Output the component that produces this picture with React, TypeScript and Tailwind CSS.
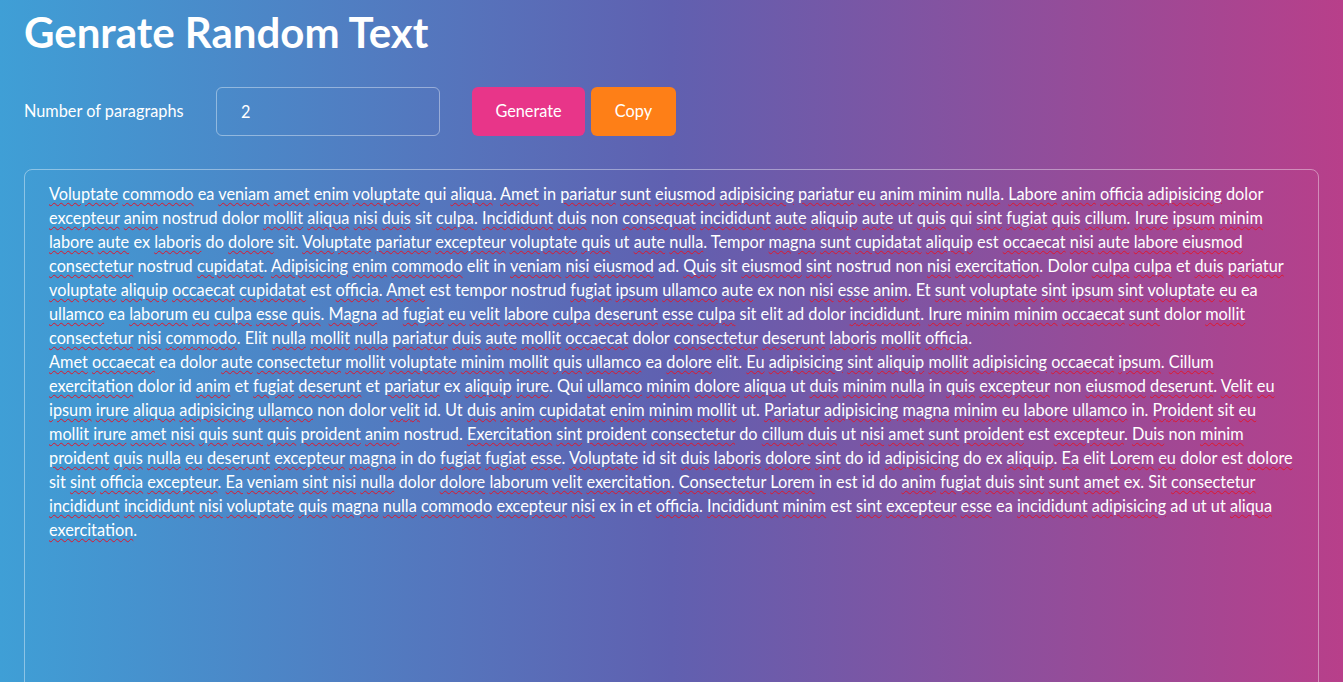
import { useState } from 'react';

const paragraphs: string[][] = [
  [
    'Voluptate commodo ea veniam amet enim voluptate qui aliqua. Amet in pariatur sunt eiusmod adipisicing pariatur eu anim minim nulla. Labore anim officia adipisicing dolor',
    'excepteur anim nostrud dolor mollit aliqua nisi duis sit culpa. Incididunt duis non consequat incididunt aute aliquip aute ut quis qui sint fugiat quis cillum. Irure ipsum minim',
    'labore aute ex laboris do dolore sit. Voluptate pariatur excepteur voluptate quis ut aute nulla. Tempor magna sunt cupidatat aliquip est occaecat nisi aute labore eiusmod',
    'consectetur nostrud cupidatat. Adipisicing enim commodo elit in veniam nisi eiusmod ad. Quis sit eiusmod sint nostrud non nisi exercitation. Dolor culpa culpa et duis pariatur',
    'voluptate aliquip occaecat cupidatat est officia. Amet est tempor nostrud fugiat ipsum ullamco aute ex non nisi esse anim. Et sunt voluptate sint ipsum sint voluptate eu ea',
    'ullamco ea laborum eu culpa esse quis. Magna ad fugiat eu velit labore culpa deserunt esse culpa sit elit ad dolor incididunt. Irure minim minim occaecat sunt dolor mollit',
    'consectetur nisi commodo. Elit nulla mollit nulla pariatur duis aute mollit occaecat dolor consectetur deserunt laboris mollit officia.',
  ],
  [
    'Amet occaecat ea dolor aute consectetur mollit voluptate minim mollit quis ullamco ea dolore elit. Eu adipisicing sint aliquip mollit adipisicing occaecat ipsum. Cillum',
    'exercitation dolor id anim et fugiat deserunt et pariatur ex aliquip irure. Qui ullamco minim dolore aliqua ut duis minim nulla in quis excepteur non eiusmod deserunt. Velit eu',
    'ipsum irure aliqua adipisicing ullamco non dolor velit id. Ut duis anim cupidatat enim minim mollit ut. Pariatur adipisicing magna minim eu labore ullamco in. Proident sit eu',
    'mollit irure amet nisi quis sunt quis proident anim nostrud. Exercitation sint proident consectetur do cillum duis ut nisi amet sunt proident est excepteur. Duis non minim',
    'proident quis nulla eu deserunt excepteur magna in do fugiat fugiat esse. Voluptate id sit duis laboris dolore sint do id adipisicing do ex aliquip. Ea elit Lorem eu dolor est dolore',
    'sit sint officia excepteur. Ea veniam sint nisi nulla dolor dolore laborum velit exercitation. Consectetur Lorem in est id do anim fugiat duis sint sunt amet ex. Sit consectetur',
    'incididunt incididunt nisi voluptate quis magna nulla commodo excepteur nisi ex in et officia. Incididunt minim est sint excepteur esse ea incididunt adipisicing ad ut ut aliqua',
    'exercitation.',
  ],
];

// words the spell checker left alone
const known = new Set([
  'ea', 'qui', 'in', 'ex', 'do', 'sit', 'non', 'est', 'et', 'ut', 'id', 'ad',
  'dolor', 'nostrud', 'tempor', 'elit',
]);

function Line({ text }: { text: string }) {
  const words = text.split(' ');
  return (
    <div className="whitespace-nowrap">
      {words.map((w, i) => {
        const m = w.match(/^([A-Za-z]+)(.*)$/);
        const word = m ? m[1] : w;
        const rest = m ? m[2] : '';
        const ok = word !== 'Ea' && known.has(word.toLowerCase());
        return (
          <span key={i}>
            {ok ? (
              word
            ) : (
              <span className="underline decoration-wavy decoration-[#e0162b] decoration-1 underline-offset-[2px]">
                {word}
              </span>
            )}
            {rest}
            {i < words.length - 1 ? ' ' : ''}
          </span>
        );
      })}
    </div>
  );
}

export default function App() {
  const [count, setCount] = useState('2');

  return (
    <main
      className="min-h-screen bg-[linear-gradient(to_right,#3f9fd6,#6060b0_50%,#b83f8a)] px-6 pb-10 text-white"
      style={{ fontFamily: 'Lato, "Open Sans", sans-serif' }}
    >
      <h1 className="pt-[7px] text-[42px] font-bold leading-[50px]">Genrate Random Text</h1>

      <div className="mt-[30px] flex items-center">
        <label className="w-[192px] text-[16.3px]">Number of paragraphs</label>
        <input
          value={count}
          onChange={(e) => setCount(e.target.value)}
          className="h-[49px] w-[224px] rounded-md border border-white/40 bg-transparent px-6 text-[16.3px] text-white outline-none"
        />
        <div className="ml-[32px] flex gap-[6px]">
          <button className="h-[49px] w-[113px] rounded-md bg-[#e83589] text-[16.3px] text-white">
            Generate
          </button>
          <button className="h-[49px] w-[85px] rounded-md bg-[#fe7f17] text-[16.3px] text-white">
            Copy
          </button>
        </div>
      </div>

      <div className="mt-[33px] h-[600px] rounded-lg border border-white/40 px-6 pt-[12px] text-[16.3px] leading-[24px]">
        {paragraphs.map((p, pi) => (
          <div key={pi}>
            {p.map((l, li) => (
              <Line key={li} text={l} />
            ))}
          </div>
        ))}
      </div>
    </main>
  );
}
